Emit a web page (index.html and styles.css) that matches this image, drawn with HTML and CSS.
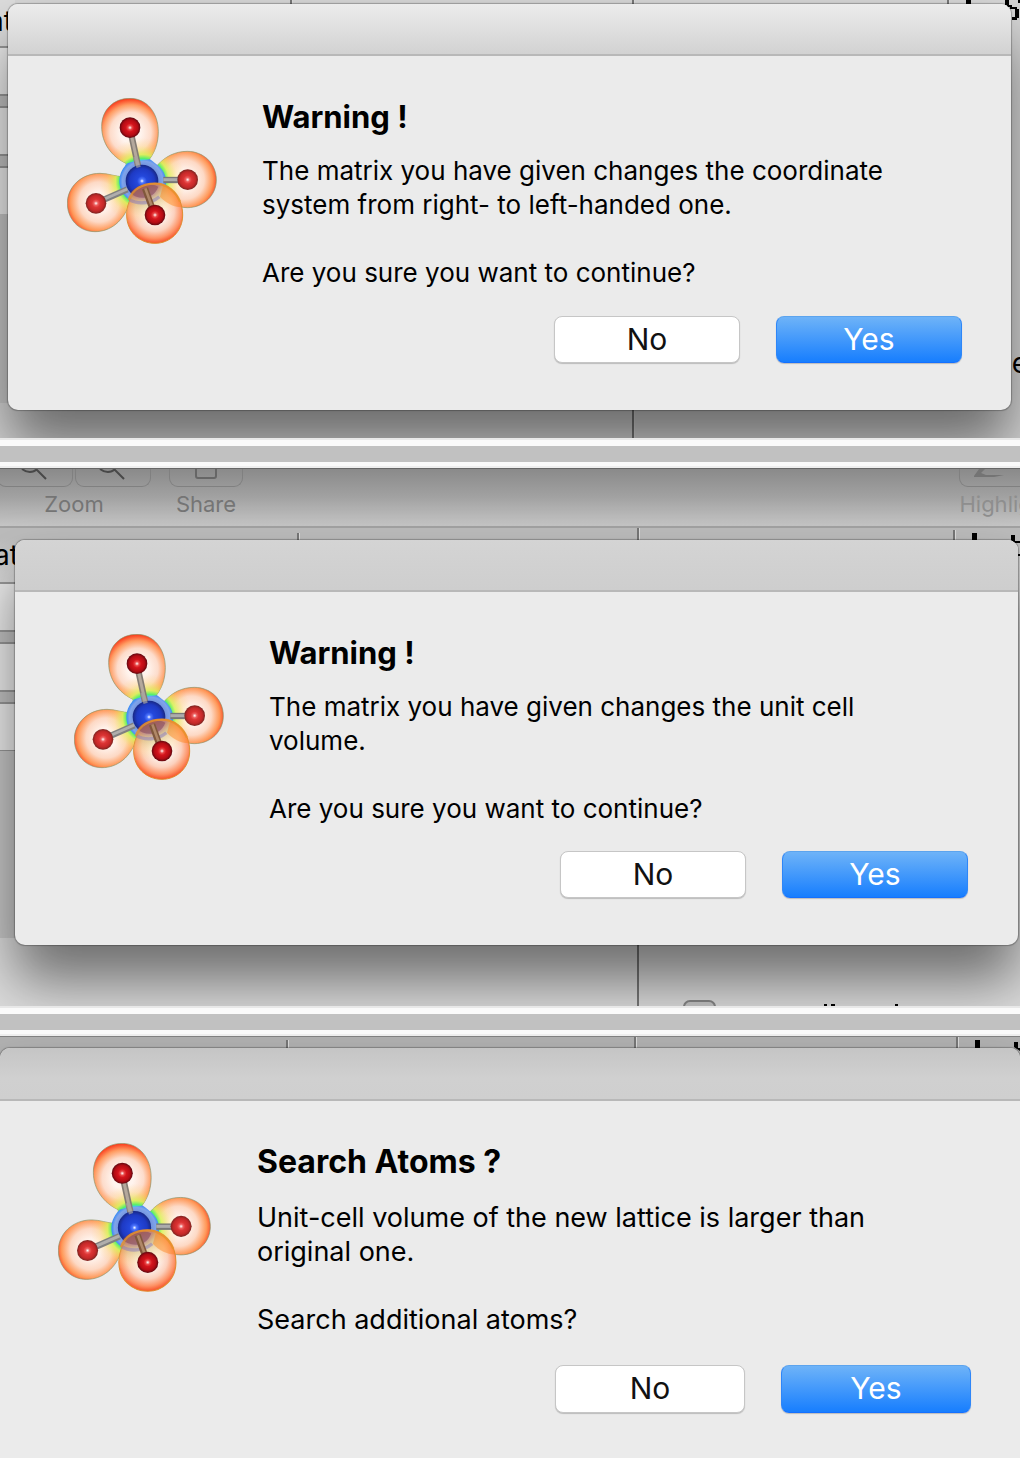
FILE: index.html
```html
<!DOCTYPE html>
<html lang="en">
<head>
<meta charset="utf-8">
<title>Confirmation dialogs</title>
<link rel="stylesheet" href="styles.css">
</head>
<body>
<svg class="defs" aria-hidden="true">
  <defs>
    <radialGradient id="lobe-top" gradientUnits="userSpaceOnUse" cx="242" cy="158" r="102">
      <stop offset=".3" stop-color="#fff4ee"/><stop offset=".6" stop-color="#fddccb"/><stop offset=".82" stop-color="#ff9c62"/><stop offset="1" stop-color="#fa3c1c"/>
    </radialGradient>
    <radialGradient id="lobe-right" gradientUnits="userSpaceOnUse" cx="404" cy="299" r="95">
      <stop offset=".3" stop-color="#fff2eb"/><stop offset=".62" stop-color="#fdd9c5"/><stop offset=".88" stop-color="#ff9858"/><stop offset="1" stop-color="#fa5a30"/>
    </radialGradient>
    <radialGradient id="lobe-left" gradientUnits="userSpaceOnUse" cx="147" cy="366" r="97">
      <stop offset=".3" stop-color="#fff2eb"/><stop offset=".62" stop-color="#fdd9c5"/><stop offset=".88" stop-color="#ff9858"/><stop offset="1" stop-color="#fa5a30"/>
    </radialGradient>
    <radialGradient id="lobe-front" gradientUnits="userSpaceOnUse" cx="314" cy="395" r="95">
      <stop offset=".35" stop-color="#fff2eb"/><stop offset=".62" stop-color="#fdcfba"/><stop offset=".84" stop-color="#ff8c5c"/><stop offset="1" stop-color="#f84418"/>
    </radialGradient>
    <radialGradient id="glow" gradientUnits="userSpaceOnUse" cx="277" cy="304" r="130">
      <stop offset=".48" stop-color="#3cc8f4"/><stop offset=".53" stop-color="#58f06a"/><stop offset=".62" stop-color="#d8f85c" stop-opacity=".85"/><stop offset=".82" stop-color="#ffe070" stop-opacity=".25"/><stop offset="1" stop-color="#ffd070" stop-opacity="0"/>
    </radialGradient>
    <radialGradient id="glow-front" gradientUnits="userSpaceOnUse" cx="277" cy="304" r="130">
      <stop offset="0" stop-color="#c07848" stop-opacity=".9"/><stop offset=".38" stop-color="#b08080" stop-opacity=".75"/><stop offset=".5" stop-color="#c8b868" stop-opacity=".55"/><stop offset=".8" stop-color="#ffd880" stop-opacity=".25"/><stop offset="1" stop-color="#ffd070" stop-opacity="0"/>
    </radialGradient>
    <radialGradient id="halo" gradientUnits="userSpaceOnUse" cx="278" cy="304" r="74">
      <stop offset=".6" stop-color="#7090dc"/><stop offset=".82" stop-color="#80a4ea"/><stop offset=".93" stop-color="#428cf4"/><stop offset="1" stop-color="#3cb8f4"/>
    </radialGradient>
    <radialGradient id="blue-ball">
      <stop offset="0" stop-color="#fff"/><stop offset=".12" stop-color="#5078ff"/><stop offset=".3" stop-color="#2448dc"/><stop offset=".75" stop-color="#1e3ac4"/><stop offset="1" stop-color="#182884"/>
    </radialGradient>
    <radialGradient id="red-ball">
      <stop offset="0" stop-color="#fff"/><stop offset=".2" stop-color="#e84848"/><stop offset=".4" stop-color="#d4141c"/><stop offset=".75" stop-color="#b40c14"/><stop offset="1" stop-color="#600810"/>
    </radialGradient>
    <radialGradient id="red-soft">
      <stop offset="0" stop-color="#fff"/><stop offset=".2" stop-color="#ec6060"/><stop offset=".4" stop-color="#dc3434"/><stop offset=".75" stop-color="#c42828"/><stop offset="1" stop-color="#7c2420"/>
    </radialGradient>
    <path id="shape-top" d="M240 55C290 55 325 98 325 155C325 190 314 217 298 238C300 246 306 252 314 262L220 272C228 262 229 256 228 250C185 230 155 190 155 140C155 90 190 55 240 55Z"/>
    <path id="shape-right" d="M322 256C345 230 375 214 412 214C460 214 499 250 499 300C499 345 462 383 412 383C380 383 345 365 325 345Z"/>
    <path id="shape-left" d="M52 370C52 320 95 280 150 280C175 280 197 290 218 290L240 365C222 425 180 455 135 455C85 455 52 415 52 370Z"/>
    <path id="shape-front" d="M315 310C365 310 398 355 398 405C398 455 360 490 315 490C268 490 230 455 230 405C230 355 265 310 315 310Z"/>
    <symbol id="molecule" viewBox="51 54 450 438">
      <g stroke="#8a9468" stroke-width="2">
        <use href="#shape-top" fill="url(#lobe-top)"/>
        <use href="#shape-right" fill="url(#lobe-right)"/>
        <use href="#shape-left" fill="url(#lobe-left)"/>
      </g>
      <g fill="url(#glow)">
        <use href="#shape-top"/><use href="#shape-right"/><use href="#shape-left"/>
      </g>
      <path d="M232 250C255 243 280 242 300 238C318 252 345 268 348 300C350 345 318 371 278 371C240 371 208 342 208 304C208 280 220 262 232 250Z" fill="url(#halo)"/>
      <g stroke-width="19">
        <path d="M243 160L268 275" stroke="#847c74"/><path d="M340 300H400" stroke="#787878"/><path d="M150 364L232 328" stroke="#808080"/>
      </g>
      <g stroke-width="9">
        <path d="M243 160L268 275" stroke="#b4a89c"/><path d="M340 299H400" stroke="#acacac"/><path d="M150 363L232 327" stroke="#b0aeac"/>
      </g>
      <circle cx="276" cy="303" r="49" fill="url(#blue-ball)"/>
      <path d="M256 230L266 262" stroke="#a8a4a0" stroke-width="13" opacity=".7"/>
      <use href="#shape-front" fill="url(#lobe-front)" stroke="#e08c30" stroke-width="3" fill-opacity=".93"/>
      <use href="#shape-front" fill="url(#glow-front)"/>
      <path d="M238 358C262 374 302 372 328 350" fill="none" stroke="#8878c0" stroke-width="10" opacity=".5"/>
      <path d="M241 338C260 360 310 362 325 320C290 304 255 318 241 338Z" fill="#7c4058" opacity=".5"/>
      <path d="M285 325L308 388" stroke="#80583c" stroke-width="19"/><path d="M286 325L309 388" stroke="#b08868" stroke-width="8"/>
      <path d="M330 350C350 372 375 382 394 381C390 352 368 325 340 314Z" fill="#ff8420" opacity=".45"/>
      <path d="M236 360C250 325 280 311 315 311C350 311 378 335 390 365" fill="none" stroke="#e8902c" stroke-width="7" opacity=".85"/>
      <circle cx="240" cy="143" r="31" fill="url(#red-ball)"/>
      <circle cx="413" cy="299" r="31" fill="url(#red-soft)"/>
      <circle cx="138" cy="370" r="31" fill="url(#red-soft)"/>
      <circle cx="315" cy="405" r="31" fill="url(#red-ball)"/>
    </symbol>
  </defs>
</svg>

<main>
  <section class="pane pane-first">
    <div class="backdrop" aria-hidden="true">
      <div class="fields"><span class="clip-label">at</span><i></i><i></i><i></i></div>
      <div class="side"></div>
      <div class="rule rule-a"></div><div class="rule rule-b"></div><div class="rule rule-c"></div>
      <svg class="ink" width="60" height="24" viewBox="0 0 60 24"><path d="M6 0h5v4H6zM45 0h4v5h3v2h5v2h2v9h-2v2h-5v-3h3v-8h-5v-2h-3v-2h-2zM58 0h2v3h-2z"/></svg>
      <span class="edge-letter">e</span>
    </div>
    <div class="dialog" role="alertdialog" aria-labelledby="t1" aria-describedby="d1">
      <div class="titlebar"></div>
      <div class="content">
        <svg class="icon" role="img" aria-label="Molecule"><use href="#molecule"/></svg>
        <div class="message">
          <h2 id="t1">Warning !</h2>
          <p id="d1">The matrix you have given changes the coordinate<br>system from right- to left-handed one.<br><br>Are you sure you want to continue?</p>
        </div>
      </div>
      <div class="actions"><button type="button">No</button><button type="button" class="primary">Yes</button></div>
    </div>
  </section>
  <div class="divider"></div>

  <section class="pane pane-second">
    <div class="backdrop" aria-hidden="true">
      <div class="toolbar">
        <div class="tool zoom">
          <div class="segments">
            <span class="box"><svg width="28" height="14" viewBox="0 0 28 14"><path d="M1 0C6 4 12 4 16 0M15 0L25 10" fill="none" stroke="#484848" stroke-width="2"/></svg></span>
            <span class="box"><svg width="28" height="14" viewBox="0 0 28 14"><path d="M1 0C6 4 12 4 16 0M15 0L25 10" fill="none" stroke="#484848" stroke-width="2"/></svg></span>
          </div>
          <span>Zoom</span>
        </div>
        <div class="tool share">
          <span class="box"><svg width="24" height="14" viewBox="0 0 24 14"><path d="M2 0V7Q2 9 4 9H20Q22 9 22 7V0" fill="none" stroke="#666" stroke-width="2"/></svg></span>
          <span>Share</span>
        </div>
        <div class="tool highlight">
          <span class="box"><svg width="30" height="14" viewBox="0 0 30 14"><path d="M0 7L5 0H11L7 4L12 6H30L20 8H0Z" fill="#747474"/></svg></span>
          <span>Highlight</span>
        </div>
      </div>
      <div class="fields"><span class="clip-label">at</span><i></i><i></i><i></i></div>
      <div class="side"></div>
      <div class="rule rule-a"></div><div class="rule rule-b"></div><div class="rule rule-c"></div>
      <svg class="ink" width="60" height="30" viewBox="0 0 60 30"><path d="M12 5h5v8h-5zM51 7h4v6h5v2h-7v-2h-2zM58 26h2v2h-2z"/></svg>
      <div class="checkbox"></div>
      <svg class="cut-text" width="80" height="2" viewBox="0 0 80 2"><path d="M2 0h3v2H2zM9 0h4v2H9zM73 0h3v2h-3z"/></svg>
    </div>
    <div class="dialog" role="alertdialog" aria-labelledby="t2" aria-describedby="d2">
      <div class="titlebar"></div>
      <div class="content">
        <svg class="icon" role="img" aria-label="Molecule"><use href="#molecule"/></svg>
        <div class="message">
          <h2 id="t2">Warning !</h2>
          <p id="d2">The matrix you have given changes the unit cell<br>volume.<br><br>Are you sure you want to continue?</p>
        </div>
      </div>
      <div class="actions"><button type="button">No</button><button type="button" class="primary">Yes</button></div>
    </div>
  </section>
  <div class="divider"></div>

  <section class="pane pane-third">
    <div class="backdrop" aria-hidden="true">
      <div class="rule rule-a"></div><div class="rule rule-b"></div><div class="rule rule-c"></div>
      <svg class="ink" width="60" height="24" viewBox="0 0 60 24"><path d="M15 3h5v8h-5zM54 5h4v6h2v3l-6-4z"/></svg>
    </div>
    <div class="dialog large" role="alertdialog" aria-labelledby="t3" aria-describedby="d3">
      <div class="titlebar"></div>
      <div class="content">
        <svg class="icon" role="img" aria-label="Molecule"><use href="#molecule"/></svg>
        <div class="message">
          <h2 id="t3">Search Atoms ?</h2>
          <p id="d3">Unit-cell volume of the new lattice is larger than<br>original one.<br><br>Search additional atoms?</p>
        </div>
      </div>
      <div class="actions"><button type="button">No</button><button type="button" class="primary">Yes</button></div>
    </div>
  </section>
</main>
</body>
</html>
```
FILE: styles.css
```css
* { box-sizing: border-box; }

body {
  margin: 0;
  background: #ebebeb;
  color: #000;
  font: 26px/34px Inter, "Liberation Sans", sans-serif;
}

.defs { position: absolute; width: 0; height: 0; }

/* Panes and the bands between them */
.pane { position: relative; overflow: hidden; display: flow-root; background: #d6d6d6; }
.pane-third { background: #b2b2b2; border-top: 1px solid #808080; }

.divider {
  height: 30px;
  background: linear-gradient(#e8e8e8 2px, #fafafa 2px 8px, #c1c1c1 8px 24px, #fafafa 24px 28px, #eee 28px);
}

/* Dialog */
.dialog {
  position: relative;
  background: #ebebeb;
  border-radius: 10px;
  box-shadow: 0 0 1px 1px rgba(0, 0, 0, .25), 0 36px 56px rgba(0, 0, 0, .5);
}
.pane-first .dialog { margin: 4px 9px 28px 8px; }
.pane-second .dialog { margin: 72px 2px 61px 15px; }
.pane-third .dialog { margin: 11px 0 0; border-radius: 10px 10px 0 0; }

.titlebar {
  height: 52px;
  border-bottom: 2px solid #b8b8b8;
  border-radius: 10px 10px 0 0;
  background: linear-gradient(#ececec, #d2d2d2);
}
.pane-second .titlebar { background: linear-gradient(#d4d4d4, #cecece); }
.pane-third .titlebar { height: 53px; background: linear-gradient(#c5c5c5, #d0d0d0 60%, #cfcfcf); }

.content { display: flex; align-items: flex-start; gap: 45px; padding: 42px 40px 0 59px; }
.icon { flex: none; width: 150px; height: 146px; }
.message { flex: 1; min-width: 0; }
h2 { margin: 0; font-size: 31px; line-height: 38px; font-weight: 700; }
p { margin: 18px 0 0; white-space: nowrap; }

.actions { display: flex; justify-content: flex-end; gap: 36px; padding: 26px 49px 47px; }
.pane-second .actions { padding: 25px 50px 47px; }

button {
  width: 186px;
  height: 47px;
  padding: 0 0 2px;
  border: 1px solid #c6c6c6;
  border-radius: 8px;
  background: #fff;
  color: #111;
  font: 30px/42px Inter, "Liberation Sans", sans-serif;
  box-shadow: 0 1px 1px rgba(0, 0, 0, .2);
}
button.primary {
  border-color: #5ca4ee #2e86f8 #1470ff;
  background: linear-gradient(#6eb3f8, #177efe);
  color: #fff;
}

.large .content { gap: 46px; padding-left: 58px; }
.large .icon { width: 153px; height: 149px; }
.large h2 { font-size: 32px; }
.large p { margin-top: 20px; font-size: 27px; }
.large .actions { padding: 28px 49px 45px; }
.large button { width: 190px; height: 48px; }

/* Window behind the dialogs */
.backdrop { position: absolute; inset: 0; }

.fields { position: absolute; left: 0; top: 0; width: 15px; padding-top: 46px; background: #ddd; }
.pane-second .fields { top: 60px; padding-top: 54px; background: none; }
.fields i {
  display: block;
  position: relative;
  height: 50px;
  margin-bottom: 10px;
  border: solid #999;
  border-width: 2px 0;
  background: #eee;
}
.fields i + i { box-shadow: 0 0 0 10px #c4c4c4; }
.clip-label { position: absolute; right: -4px; top: 10px; font-size: 28px; line-height: 34px; }
.pane-first .clip-label { right: 2px; top: 4px; }

.side { position: absolute; left: 0; top: 214px; width: 15px; height: 189px; background: #c8c8c8; }
.pane-second .side { top: 283px; height: 187px; }

.rule { position: absolute; top: 0; bottom: 0; width: 3px; background: #777; border-right: 1px solid #ddd; }
.rule-a { left: 290px; bottom: 50%; }
.rule-b { left: 632px; }
.rule-c { left: 947px; bottom: 50%; }
.pane-second .rule { top: 60px; }
.pane-second .rule-a { left: 297px; top: 65px; }
.pane-second .rule-b { left: 637px; }
.pane-second .rule-c { left: 953px; top: 62px; }
.pane-third .rule-a { left: 286px; top: 3px; }
.pane-third .rule-b { left: 634px; }
.pane-third .rule-c { left: 956px; }

.ink { position: absolute; right: 0; top: 0; }
.pane-second .ink { top: 60px; }
.edge-letter { position: absolute; right: -8px; top: 346px; font-size: 28px; }

.toolbar {
  position: relative;
  height: 60px;
  overflow: hidden;
  border-top: 1px solid #666;
  border-bottom: 2px solid #a2a2a2;
  background: linear-gradient(#8a8a8a, #a2a2a2 50%, #c6c6c6);
  color: #757575;
  font-size: 22px;
  line-height: 34px;
  display: flex;
}
.pane-second .backdrop { background: linear-gradient(#bcbcbc 70px, #dcdcdc 120px); }
.tool { display: flex; flex-direction: column; align-items: center; }
.segments { display: flex; gap: 2px; }
.box {
  display: flex;
  justify-content: center;
  width: 76px;
  height: 18px;
  border: 1px solid #808080;
  border-top: 0;
  border-radius: 0 0 9px 9px;
}
.tool.zoom { margin-left: -3px; }
.tool.share { margin-left: 18px; }
.tool.share .box { width: 74px; }
.tool.highlight { margin-left: auto; margin-right: -32px; color: #8e8e8e; }
.tool.highlight .box { align-self: stretch; width: auto; justify-content: flex-start; padding-left: 14px; }

.checkbox { position: absolute; left: 683px; bottom: -26px; width: 33px; height: 32px; border: 2px solid #858585; border-radius: 7px; background: #c4c4c4; }
.cut-text { position: absolute; left: 822px; bottom: 0; }
```
